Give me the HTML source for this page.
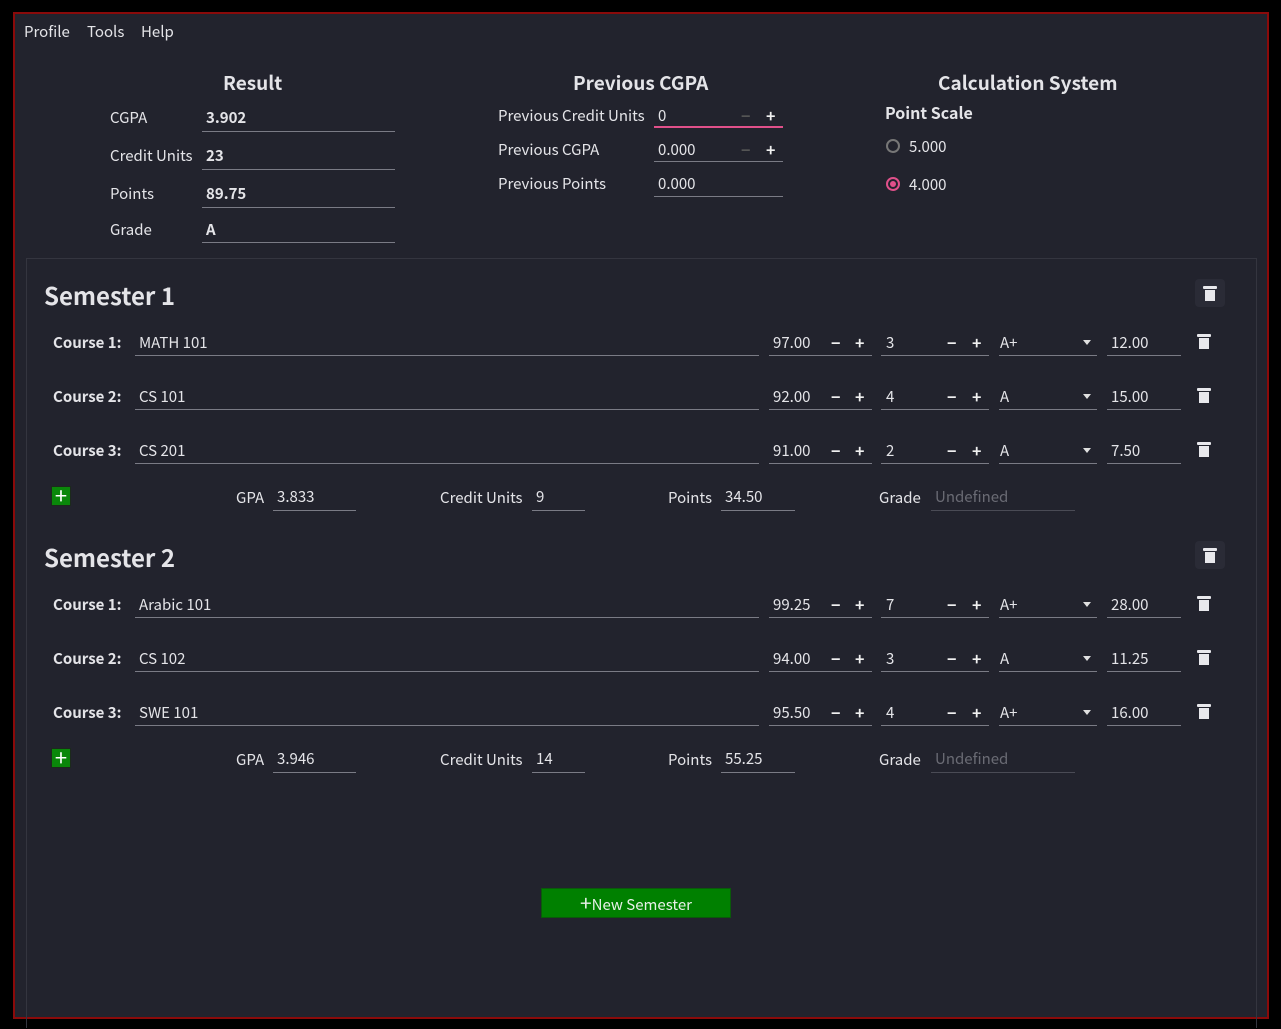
<!DOCTYPE html>
<html><head><meta charset="utf-8"><style>
*{margin:0;padding:0;box-sizing:border-box}
body{width:1281px;height:1029px;background:#000;position:relative;overflow:hidden;font-family:"Noto Sans CJK SC","Liberation Sans",sans-serif;font-size:15px;color:#e4e4e8}
#win{position:absolute;left:13px;top:12px;width:1256px;height:1007px;border:2px solid #8a0a0a;background:#22232d}
.a{position:absolute;white-space:nowrap}
.t{position:absolute;white-space:nowrap;line-height:20px;height:20px;margin-top:1px}
.b{font-weight:bold}
.ul{position:absolute;height:1px;background:#7a7b85}
.h{font-weight:bold;font-size:19px}
.sem{font-weight:bold;font-size:24px}
.pm{position:absolute;font-weight:bold;line-height:20px;font-size:16px;color:#f0f0f0}
.row{position:absolute;left:0;top:0;width:1281px;height:1px}
.tr{position:absolute;width:14px;height:16px}
.tr:before{content:"";position:absolute;left:0;top:1px;width:14px;height:3px;background:#e8e8ec;border-radius:1px}
.tr:after{content:"";position:absolute;left:2px;top:5px;width:10px;height:11px;background:#e8e8ec}
.tb{position:absolute;width:30px;height:28px;background:#2a2b36;border-radius:4px}
.add{position:absolute;width:20px;height:20px;background:#0a870a;border:1px solid #1c2a1c;color:#fff;font-size:22px;line-height:17px;text-align:center;font-weight:normal}
.ph{color:#6a6b74}
.arr{position:absolute;width:0;height:0;border-left:4px solid transparent;border-right:4px solid transparent;border-top:5px solid #e0e0e0}
</style></head><body>
<div id="win"></div>
<div class="t" style="left:24px;top:21px">Profile</div>
<div class="t" style="left:87px;top:21px">Tools</div>
<div class="t" style="left:141px;top:21px">Help</div>

<div class="t h" style="left:223px;top:71px;line-height:22px">Result</div>
<div class="t" style="left:110px;top:107px">CGPA</div><div class="t b" style="left:206px;top:107px">3.902</div><div class="ul" style="left:202px;top:131px;width:193px"></div>
<div class="t" style="left:110px;top:145px">Credit Units</div><div class="t b" style="left:206px;top:145px">23</div><div class="ul" style="left:202px;top:169px;width:193px"></div>
<div class="t" style="left:110px;top:183px">Points</div><div class="t b" style="left:206px;top:183px">89.75</div><div class="ul" style="left:202px;top:207px;width:193px"></div>
<div class="t" style="left:110px;top:219px">Grade</div><div class="t b" style="left:206px;top:219px">A</div><div class="ul" style="left:202px;top:242px;width:193px"></div>

<div class="t h" style="left:573px;top:71px;line-height:22px">Previous CGPA</div>
<div class="t" style="left:498px;top:105px">Previous Credit Units</div><div class="t" style="left:658px;top:105px">0</div><div class="pm" style="left:741px;top:105px;color:#555">−</div><div class="pm" style="left:766px;top:105px">+</div><div class="ul" style="left:654px;top:126px;width:129px;height:2px;background:#e0508a"></div>
<div class="t" style="left:498px;top:139px">Previous CGPA</div><div class="t" style="left:658px;top:139px">0.000</div><div class="pm" style="left:741px;top:139px;color:#555">−</div><div class="pm" style="left:766px;top:139px">+</div><div class="ul" style="left:654px;top:161px;width:129px"></div>
<div class="t" style="left:498px;top:173px">Previous Points</div><div class="t" style="left:658px;top:173px">0.000</div><div class="ul" style="left:654px;top:196px;width:129px"></div>

<div class="t h" style="left:938px;top:71px;line-height:22px">Calculation System</div>
<div class="t b" style="left:885px;top:101px;font-size:16px">Point Scale</div>
<div class="a" style="left:886px;top:139px;width:14px;height:14px;border:2px solid #777;border-radius:50%"></div><div class="t" style="left:909px;top:136px">5.000</div>
<div class="a" style="left:886px;top:177px;width:14px;height:14px;border:2px solid #e0508a;border-radius:50%"></div><div class="a" style="left:890px;top:181px;width:6px;height:6px;background:#e0508a;border-radius:50%"></div><div class="t" style="left:909px;top:174px">4.000</div>

<div class="a" style="left:26px;top:258px;width:1231px;height:770px;border:1px solid #34353f;border-bottom:none"></div>

<!-- Semester 1 -->
<div class="t sem" style="left:44px;top:280px;height:28px;line-height:28px">Semester 1</div>
<div class="tb" style="left:1195px;top:279px"></div><div class="tr" style="left:1203px;top:285px"></div>

<div class="row" style="top:342px">
<div class="t b" style="left:53px;top:-10px">Course 1:</div><div class="t" style="left:139px;top:-10px">MATH 101</div><div class="ul" style="left:135px;top:13px;width:624px"></div>
<div class="t" style="left:773px;top:-10px">97.00</div><div class="pm" style="left:831px;top:-10px">−</div><div class="pm" style="left:855px;top:-10px">+</div><div class="ul" style="left:769px;top:13px;width:103px"></div>
<div class="t" style="left:886px;top:-10px">3</div><div class="pm" style="left:947px;top:-10px">−</div><div class="pm" style="left:972px;top:-10px">+</div><div class="ul" style="left:881px;top:13px;width:108px"></div>
<div class="t" style="left:1000px;top:-10px">A+</div><div class="arr" style="left:1083px;top:-2px"></div><div class="ul" style="left:999px;top:13px;width:98px"></div>
<div class="t" style="left:1111px;top:-10px">12.00</div><div class="ul" style="left:1107px;top:13px;width:74px"></div>
<div class="tr" style="left:1197px;top:-9px"></div></div>

<div class="row" style="top:396px">
<div class="t b" style="left:53px;top:-10px">Course 2:</div><div class="t" style="left:139px;top:-10px">CS 101</div><div class="ul" style="left:135px;top:13px;width:624px"></div>
<div class="t" style="left:773px;top:-10px">92.00</div><div class="pm" style="left:831px;top:-10px">−</div><div class="pm" style="left:855px;top:-10px">+</div><div class="ul" style="left:769px;top:13px;width:103px"></div>
<div class="t" style="left:886px;top:-10px">4</div><div class="pm" style="left:947px;top:-10px">−</div><div class="pm" style="left:972px;top:-10px">+</div><div class="ul" style="left:881px;top:13px;width:108px"></div>
<div class="t" style="left:1000px;top:-10px">A</div><div class="arr" style="left:1083px;top:-2px"></div><div class="ul" style="left:999px;top:13px;width:98px"></div>
<div class="t" style="left:1111px;top:-10px">15.00</div><div class="ul" style="left:1107px;top:13px;width:74px"></div>
<div class="tr" style="left:1197px;top:-9px"></div></div>

<div class="row" style="top:450px">
<div class="t b" style="left:53px;top:-10px">Course 3:</div><div class="t" style="left:139px;top:-10px">CS 201</div><div class="ul" style="left:135px;top:13px;width:624px"></div>
<div class="t" style="left:773px;top:-10px">91.00</div><div class="pm" style="left:831px;top:-10px">−</div><div class="pm" style="left:855px;top:-10px">+</div><div class="ul" style="left:769px;top:13px;width:103px"></div>
<div class="t" style="left:886px;top:-10px">2</div><div class="pm" style="left:947px;top:-10px">−</div><div class="pm" style="left:972px;top:-10px">+</div><div class="ul" style="left:881px;top:13px;width:108px"></div>
<div class="t" style="left:1000px;top:-10px">A</div><div class="arr" style="left:1083px;top:-2px"></div><div class="ul" style="left:999px;top:13px;width:98px"></div>
<div class="t" style="left:1111px;top:-10px">7.50</div><div class="ul" style="left:1107px;top:13px;width:74px"></div>
<div class="tr" style="left:1197px;top:-9px"></div></div>

<div class="row" style="top:497px">
<div class="add" style="left:51px;top:-11px">+</div>
<div class="t" style="left:236px;top:-10px">GPA</div><div class="t" style="left:277px;top:-11px">3.833</div><div class="ul" style="left:273px;top:13px;width:83px"></div>
<div class="t" style="left:440px;top:-10px">Credit Units</div><div class="t" style="left:536px;top:-11px">9</div><div class="ul" style="left:532px;top:13px;width:53px"></div>
<div class="t" style="left:668px;top:-10px">Points</div><div class="t" style="left:725px;top:-11px">34.50</div><div class="ul" style="left:721px;top:13px;width:74px"></div>
<div class="t" style="left:879px;top:-10px">Grade</div><div class="t ph" style="left:935px;top:-11px">Undefined</div><div class="ul" style="left:931px;top:13px;width:144px;background:#4a4b55"></div>
</div>

<!-- Semester 2 -->
<div class="t sem" style="left:44px;top:542px;height:28px;line-height:28px">Semester 2</div>
<div class="tb" style="left:1195px;top:541px"></div><div class="tr" style="left:1203px;top:547px"></div>

<div class="row" style="top:604px">
<div class="t b" style="left:53px;top:-10px">Course 1:</div><div class="t" style="left:139px;top:-10px">Arabic 101</div><div class="ul" style="left:135px;top:13px;width:624px"></div>
<div class="t" style="left:773px;top:-10px">99.25</div><div class="pm" style="left:831px;top:-10px">−</div><div class="pm" style="left:855px;top:-10px">+</div><div class="ul" style="left:769px;top:13px;width:103px"></div>
<div class="t" style="left:886px;top:-10px">7</div><div class="pm" style="left:947px;top:-10px">−</div><div class="pm" style="left:972px;top:-10px">+</div><div class="ul" style="left:881px;top:13px;width:108px"></div>
<div class="t" style="left:1000px;top:-10px">A+</div><div class="arr" style="left:1083px;top:-2px"></div><div class="ul" style="left:999px;top:13px;width:98px"></div>
<div class="t" style="left:1111px;top:-10px">28.00</div><div class="ul" style="left:1107px;top:13px;width:74px"></div>
<div class="tr" style="left:1197px;top:-9px"></div></div>

<div class="row" style="top:658px">
<div class="t b" style="left:53px;top:-10px">Course 2:</div><div class="t" style="left:139px;top:-10px">CS 102</div><div class="ul" style="left:135px;top:13px;width:624px"></div>
<div class="t" style="left:773px;top:-10px">94.00</div><div class="pm" style="left:831px;top:-10px">−</div><div class="pm" style="left:855px;top:-10px">+</div><div class="ul" style="left:769px;top:13px;width:103px"></div>
<div class="t" style="left:886px;top:-10px">3</div><div class="pm" style="left:947px;top:-10px">−</div><div class="pm" style="left:972px;top:-10px">+</div><div class="ul" style="left:881px;top:13px;width:108px"></div>
<div class="t" style="left:1000px;top:-10px">A</div><div class="arr" style="left:1083px;top:-2px"></div><div class="ul" style="left:999px;top:13px;width:98px"></div>
<div class="t" style="left:1111px;top:-10px">11.25</div><div class="ul" style="left:1107px;top:13px;width:74px"></div>
<div class="tr" style="left:1197px;top:-9px"></div></div>

<div class="row" style="top:712px">
<div class="t b" style="left:53px;top:-10px">Course 3:</div><div class="t" style="left:139px;top:-10px">SWE 101</div><div class="ul" style="left:135px;top:13px;width:624px"></div>
<div class="t" style="left:773px;top:-10px">95.50</div><div class="pm" style="left:831px;top:-10px">−</div><div class="pm" style="left:855px;top:-10px">+</div><div class="ul" style="left:769px;top:13px;width:103px"></div>
<div class="t" style="left:886px;top:-10px">4</div><div class="pm" style="left:947px;top:-10px">−</div><div class="pm" style="left:972px;top:-10px">+</div><div class="ul" style="left:881px;top:13px;width:108px"></div>
<div class="t" style="left:1000px;top:-10px">A+</div><div class="arr" style="left:1083px;top:-2px"></div><div class="ul" style="left:999px;top:13px;width:98px"></div>
<div class="t" style="left:1111px;top:-10px">16.00</div><div class="ul" style="left:1107px;top:13px;width:74px"></div>
<div class="tr" style="left:1197px;top:-9px"></div></div>

<div class="row" style="top:759px">
<div class="add" style="left:51px;top:-11px">+</div>
<div class="t" style="left:236px;top:-10px">GPA</div><div class="t" style="left:277px;top:-11px">3.946</div><div class="ul" style="left:273px;top:13px;width:83px"></div>
<div class="t" style="left:440px;top:-10px">Credit Units</div><div class="t" style="left:536px;top:-11px">14</div><div class="ul" style="left:532px;top:13px;width:53px"></div>
<div class="t" style="left:668px;top:-10px">Points</div><div class="t" style="left:725px;top:-11px">55.25</div><div class="ul" style="left:721px;top:13px;width:74px"></div>
<div class="t" style="left:879px;top:-10px">Grade</div><div class="t ph" style="left:935px;top:-11px">Undefined</div><div class="ul" style="left:931px;top:13px;width:144px;background:#4a4b55"></div>
</div>

<div class="a" style="left:541px;top:888px;width:190px;height:30px;background:#008000;border:1px solid #0a5a0a;text-align:center;line-height:28px;color:#e8f0e8"><span style="font-size:21px;vertical-align:-1px">+</span>New Semester</div>
</body></html>
